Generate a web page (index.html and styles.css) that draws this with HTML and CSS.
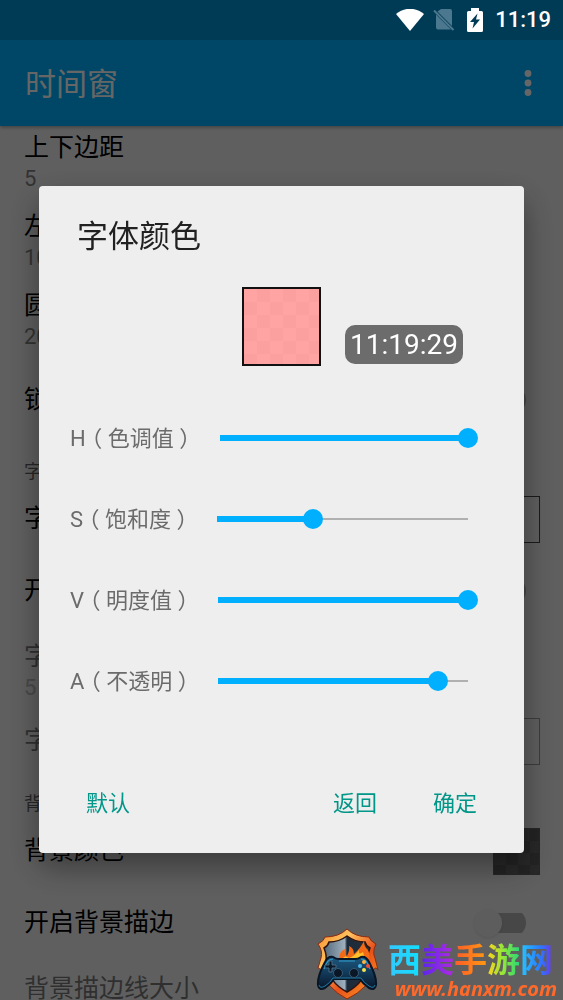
FILE: index.html
```html
<!DOCTYPE html>
<html lang="zh-CN">
<head>
    <meta charset="UTF-8">
    <meta name="viewport" content="width=device-width, initial-scale=1.0">
    <title>时间窗</title>
    <link rel="stylesheet" href="styles.css">
</head>
<body>

    <div class="screen">
        <div class="status-bar">
            <svg class="wifi" width="28" height="22" viewBox="0 0 28 22">
                <path d="M0 5 C8 -2 20 -2 28 5 L14 22 Z" fill="#fff"/>
            </svg>
            <svg class="sim" width="22" height="22" viewBox="0 0 22 22">
                <path d="M8 0 H17 Q19 0 19 2 V17 L4.500 2.500 Z M3 5.500 L18 20.500 H5 Q3 20.500 3 18.500 Z" fill="#4b788e"/>
                <path d="M1 1.500 L20.500 21" stroke="#4b788e" stroke-width="2"/>
            </svg>
            <svg class="battery" width="16" height="24" viewBox="0 0 16 24">
                <path d="M4 3 V0 H12 V3 H14.5 Q16 3 16 4.500 V22.500 Q16 24 14.500 24 H1.500 Q0 24 0 22.500 V4.500 Q0 3 1.500 3 Z" fill="#fff"/>
                <path d="M10.500 5.500 L3 14 H7 L5.500 20.500 L13 11.500 H9 Z" fill="#003b55"/>
            </svg>
            <span class="clock">11:19</span>
        </div>

        <header class="app-bar">
            <h1>时间窗</h1>
            <button class="menu-button" type="button" aria-label="更多">
                <svg width="8" height="28" viewBox="0 0 8 28" fill="#fff">
                    <circle cx="4" cy="4.500" r="3.400"/>
                    <circle cx="4" cy="14" r="3.400"/>
                    <circle cx="4" cy="23.500" r="3.400"/>
                </svg>
            </button>
        </header>

        <main class="settings">
            <div class="row row-value">
                <div class="row-title">上下边距</div>
                <div class="row-summary">5</div>
            </div>
            <div class="row row-value">
                <div class="row-title">左右边距</div>
                <div class="row-summary">10</div>
            </div>
            <div class="row row-value">
                <div class="row-title">圆角大小</div>
                <div class="row-summary">20</div>
            </div>
            <div class="row row-switch">
                <label class="row-title" for="lock">锁定位置</label>
                <input class="switch" type="checkbox" id="lock">
            </div>
            <h2 class="category">字体</h2>
            <div class="row row-color">
                <div class="row-title">字体颜色</div>
                <div class="swatch"></div>
            </div>
            <div class="row row-switch">
                <label class="row-title" for="font-stroke">开启字体描边</label>
                <input class="switch" type="checkbox" id="font-stroke">
            </div>
            <div class="row row-value disabled">
                <div class="row-title">字体描边线大小</div>
                <div class="row-summary">5</div>
            </div>
            <div class="row row-color disabled">
                <div class="row-title">字体描边颜色</div>
                <div class="swatch"></div>
            </div>
            <h2 class="category">背景</h2>
            <div class="row row-color">
                <div class="row-title">背景颜色</div>
                <div class="swatch swatch-dark"></div>
            </div>
            <div class="row row-switch">
                <label class="row-title" for="bg-stroke">开启背景描边</label>
                <input class="switch" type="checkbox" id="bg-stroke">
            </div>
            <div class="row row-value disabled">
                <div class="row-title">背景描边线大小</div>
            </div>
        </main>
    </div>

    <div class="overlay">
        <form class="dialog" role="dialog" aria-labelledby="dialog-title">
            <h2 class="dialog-title" id="dialog-title">字体颜色</h2>

            <div class="preview">
                <div class="preview-color"></div>
                <div class="preview-time">11:19:29</div>
            </div>

            <div class="sliders">
                <div class="slider-row">
                    <label for="hue">H<span class="paren">（</span>色调值<span class="paren">）</span></label>
                    <input type="range" id="hue" min="0" max="1000" value="1000" style="--value: 1">
                </div>
                <div class="slider-row">
                    <label for="saturation">S<span class="paren">（</span>饱和度<span class="paren">）</span></label>
                    <input type="range" id="saturation" min="0" max="1000" value="384" style="--value: 0.384">
                </div>
                <div class="slider-row">
                    <label for="brightness">V<span class="paren">（</span>明度值<span class="paren">）</span></label>
                    <input type="range" id="brightness" min="0" max="1000" value="1000" style="--value: 1">
                </div>
                <div class="slider-row">
                    <label for="alpha">A<span class="paren">（</span>不透明<span class="paren">）</span></label>
                    <input type="range" id="alpha" min="0" max="1000" value="880" style="--value: 0.88">
                </div>
            </div>

            <div class="actions">
                <button class="default-button" type="button">默认</button>
                <button type="button">返回</button>
                <button type="button">确定</button>
            </div>
        </form>
    </div>

    <div class="watermark">
        <svg width="64" height="72" viewBox="0 0 64 72">
            <defs>
                <linearGradient id="fire" x1="0" y1="0" x2="1" y2="1">
                    <stop offset="0" stop-color="#f58a2c"/>
                    <stop offset="0.3" stop-color="#ffc25e"/>
                    <stop offset="0.6" stop-color="#e8501a"/>
                    <stop offset="1" stop-color="#ffa826"/>
                </linearGradient>
                <linearGradient id="steel" x1="0" y1="0" x2="1" y2="0">
                    <stop offset="0" stop-color="#53697d"/>
                    <stop offset="0.45" stop-color="#9fb0bd"/>
                    <stop offset="0.5" stop-color="#1b2a3a"/>
                    <stop offset="1" stop-color="#24303c"/>
                </linearGradient>
                <linearGradient id="pad" x1="0" y1="0" x2="0" y2="1">
                    <stop offset="0" stop-color="#1d587d"/>
                    <stop offset="0.5" stop-color="#12395a"/>
                    <stop offset="1" stop-color="#0a1526"/>
                </linearGradient>
            </defs>
            <path d="M31 1 Q39 9 53 9 Q54 13 60 16 Q56 24 59 30 L62 42 Q60 38 57 42 Q54 60 31 71 Q10 60 6 42 L2 40 L5 30 Q7 23 2 16 Q8 13 9 9 Q23 9 31 1 Z" fill="url(#fire)" stroke="#8b2b12" stroke-width="1"/>
            <path d="M31 8 Q39 14 49 14 Q50 18 54 20 Q51 27 52 34 Q50 54 31 64 Q12 54 10 34 Q11 27 8 20 Q12 18 13 14 Q23 14 31 8 Z" fill="url(#steel)" stroke="#30140d" stroke-width="1.5"/>
            <path d="M23 29 Q24 23 29 21 Q28 26 31 28 Q34 22 33 18 Q38 20 38 26 Q44 21 48 13 Q48 19 52 22 Q55 28 52 35 L23 32 Z" fill="#f36a16"/>
            <path d="M27 30 Q29 27 33 30 Q39 28 43 22 Q42 28 47 24 Q48 29 50 33 Z" fill="#ffc02c"/>
            <path d="M17 29 Q12 28 9 34 Q1 49 2 57 Q3 63 9 60 Q15 56 18 51 H44 Q47 56 53 60 Q59 63 60 57 Q61 49 53 34 Q50 28 45 29 Q42 31 39 31 H23 Q20 31 17 29 Z" fill="url(#pad)" stroke="#081525" stroke-width="2"/>
            <path d="M17 31 Q11 31 8 41 M45 31 Q51 31 54 41 M23 33 H39" fill="none" stroke="#2e9fd0" stroke-width="1.200"/>
            <path d="M3 57 Q4 61 9 58 Q14 55 17 50 H45 Q48 55 53 58 Q58 61 59 57" fill="none" stroke="#217ca9" stroke-width="1"/>
            <path d="M13 33 H16 V37 H20 V40 H16 V44 H13 V40 H9 V37 H13 Z" fill="#0a1726" stroke="#496a80" stroke-width="1"/>
            <circle cx="22" cy="45" r="4.500" fill="#0a1726" stroke="#375c73"/>
            <circle cx="38" cy="45" r="4.500" fill="#0a1726" stroke="#375c73"/>
            <circle cx="44" cy="38" r="2" fill="#4bb6e8"/>
            <circle cx="48" cy="34" r="2" fill="#ffb43b"/>
            <circle cx="52" cy="38" r="2" fill="#ef4c3b"/>
            <circle cx="48" cy="42" r="2" fill="#f4e34c"/>
        </svg>
        <div class="watermark-text">
            <div class="site-name"><span class="c1">西</span><span class="c2">美</span><span class="c3">手</span><span class="c4">游</span><span class="c5">网</span></div>
            <div class="site-url">www.hanxm.com</div>
        </div>
    </div>

</body>
</html>
```
FILE: styles.css
```css
* {
    margin: 0;
    padding: 0;
    box-sizing: border-box;
}

body {
    font-family: Roboto, "Noto Sans CJK SC", sans-serif;
    background-color: #eee;
    overflow: hidden;
}

button {
    font-family: inherit;
    background: none;
    border: none;
    cursor: pointer;
}

.screen {
    height: 100vh;
    overflow: hidden;
    display: flex;
    flex-direction: column;
}

/* Status bar stays above the dimmed overlay */
.status-bar {
    position: relative;
    z-index: 3;
    flex: none;
    height: 40px;
    padding-right: 12px;
    display: flex;
    align-items: center;
    justify-content: flex-end;
    background-color: #003b55;
    color: #fff;
}

.sim {
    margin-left: 9px;
}

.battery {
    margin: 0 12px;
}

.clock {
    font-size: 22px;
    font-weight: 500;
    line-height: 40px;
}

.app-bar {
    position: relative;
    z-index: 1;
    flex: none;
    height: 86px;
    padding: 0 20px 0 25px;
    display: flex;
    align-items: center;
    justify-content: space-between;
    background-color: #00b0ff;
    box-shadow: 0 1px 4px rgba(0, 0, 0, 0.4);
}

.app-bar h1 {
    padding-bottom: 4px;
    font-size: 31px;
    font-weight: 400;
    color: #fff;
}

.menu-button {
    width: 30px;
    height: 40px;
}

.menu-button svg {
    display: block;
    margin: 0 auto;
}

/* Settings list, scrolled a little under the app bar */
.settings {
    margin-top: -4px;
    color: #000;
}

.row {
    padding: 0 23px 0 24px;
}

.row-title {
    font-size: 25px;
    line-height: 30px;
}

.row-value {
    height: 79px;
    padding-top: 11px;
}

.row-summary {
    font-size: 22px;
    line-height: 32px;
    color: #808080;
}

.row-switch,
.row-color {
    display: flex;
    align-items: center;
    justify-content: space-between;
}

.row-switch {
    height: 81px;
    padding-right: 37px;
}

.row-color {
    height: 62px;
}

.category {
    height: 48px;
    padding: 20px 24px 0;
    font-size: 18px;
    font-weight: 400;
    line-height: 24px;
    color: #606060;
}

.disabled {
    opacity: 0.5;
}

.swatch {
    width: 47px;
    height: 47px;
    border: 1px solid #444;
}

.swatch-dark {
    border-color: #606060;
    background: repeating-conic-gradient(#585858 0 25%, #646464 0 50%) 0 0 / 24px 24px;
}

.switch {
    appearance: none;
    width: 54px;
    height: 28px;
    display: flex;
    align-items: center;
    border-radius: 14px;
    background: linear-gradient(#b2b2b2, #b2b2b2) right center / 34px 20px no-repeat;
}

.switch::before {
    content: "";
    width: 28px;
    height: 28px;
    margin-left: 2px;
    border-radius: 50%;
    background-color: #e9e9e9;
    box-shadow: 0 1px 3px rgba(0, 0, 0, 0.1);
}

.overlay {
    position: fixed;
    inset: 0;
    z-index: 2;
    padding: 40px 39px 0;
    display: flex;
    align-items: center;
    background-color: rgba(0, 0, 0, 0.6);
}

.dialog {
    width: 100%;
    margin-bottom: 2px;
    padding-top: 31px;
    border-radius: 4px;
    background-color: #eee;
    box-shadow: 0 14px 32px rgba(0, 0, 0, 0.4);
}

.dialog-title {
    padding: 0 38px;
    font-size: 31px;
    font-weight: 400;
    line-height: 40px;
    color: #212121;
}

.preview {
    margin: 30px 0 32px;
    display: grid;
    grid-template-columns: 1fr auto 1fr;
    align-items: end;
}

.preview-color {
    grid-column: 2;
    width: 79px;
    height: 79px;
    border: 2px solid #111;
    background: repeating-conic-gradient(#fb9f9f 0 25%, #ffa3a3 0 50%) 0 0 / 26px 26px;
}

.preview-time {
    justify-self: start;
    margin: 0 0 2px 24px;
    padding: 0 5px;
    border-radius: 10px;
    font-size: 28px;
    line-height: 39px;
    color: #fff;
    background-color: #6c6c6c;
}

.slider-row {
    height: 81px;
    padding: 0 46px 0 31px;
    display: flex;
    align-items: center;
    gap: 14px;
}

.slider-row label {
    padding-top: 1px;
    font-size: 22px;
    line-height: 32px;
    white-space: nowrap;
    color: #6b6b6b;
}

/* Half-width bracket glyph centred in a full-width cell */
.paren {
    display: inline-block;
    width: 22px;
    font-feature-settings: "halt";
    text-align: center;
}

.slider-row input {
    appearance: none;
    flex: 1;
    min-width: 0;
    height: 20px;
    background: none;
}

.slider-row input::-webkit-slider-runnable-track {
    height: 20px;
    background:
        linear-gradient(#00b0ff, #00b0ff) 10px center / calc((100% - 20px) * var(--value)) 6px no-repeat,
        linear-gradient(#b0b0b0, #b0b0b0) 10px center / calc(100% - 20px) 2px no-repeat;
}

.slider-row input::-webkit-slider-thumb {
    appearance: none;
    width: 20px;
    height: 20px;
    border-radius: 50%;
    background-color: #00b0ff;
}

.actions {
    height: 97px;
    margin-top: 34px;
    padding: 0 29px;
    display: flex;
    align-items: center;
    justify-content: flex-end;
    gap: 20px;
}

.actions button {
    padding: 0 18px;
    font-size: 22px;
    line-height: 48px;
    color: #009688;
}

.actions .default-button {
    margin-right: auto;
}

.watermark {
    position: fixed;
    right: 6px;
    bottom: 0;
    z-index: 4;
    display: flex;
    align-items: flex-end;
    gap: 8px;
}

.watermark svg {
    display: block;
}

.site-name {
    display: flex;
    padding-right: 4px;
    font-family: "Noto Sans CJK SC", sans-serif;
    font-size: 33px;
    font-weight: 700;
    line-height: 38px;
}

.site-name span {
    color: transparent;
    background-clip: text;
    -webkit-background-clip: text;
}

.c1 {
    background-image: linear-gradient(90deg, #35c8ff, #0fe0ff);
}

.c2 {
    background-image: linear-gradient(90deg, #5a25f0, #b02be0);
}

.c3 {
    background-image: linear-gradient(90deg, #ff5a2a, #ff9a10);
}

.c4 {
    background-image: linear-gradient(90deg, #ffd21a, #8fe83a 50%, #25d67a);
}

.c5 {
    background-image: linear-gradient(90deg, #25c8ff, #2a7cff 60%, #6a35f0);
}

.site-url {
    font-family: "Noto Sans", sans-serif;
    font-size: 20px;
    font-style: italic;
    font-weight: 700;
    line-height: 23px;
    text-align: right;
    color: #ff6a2b;
}
```
